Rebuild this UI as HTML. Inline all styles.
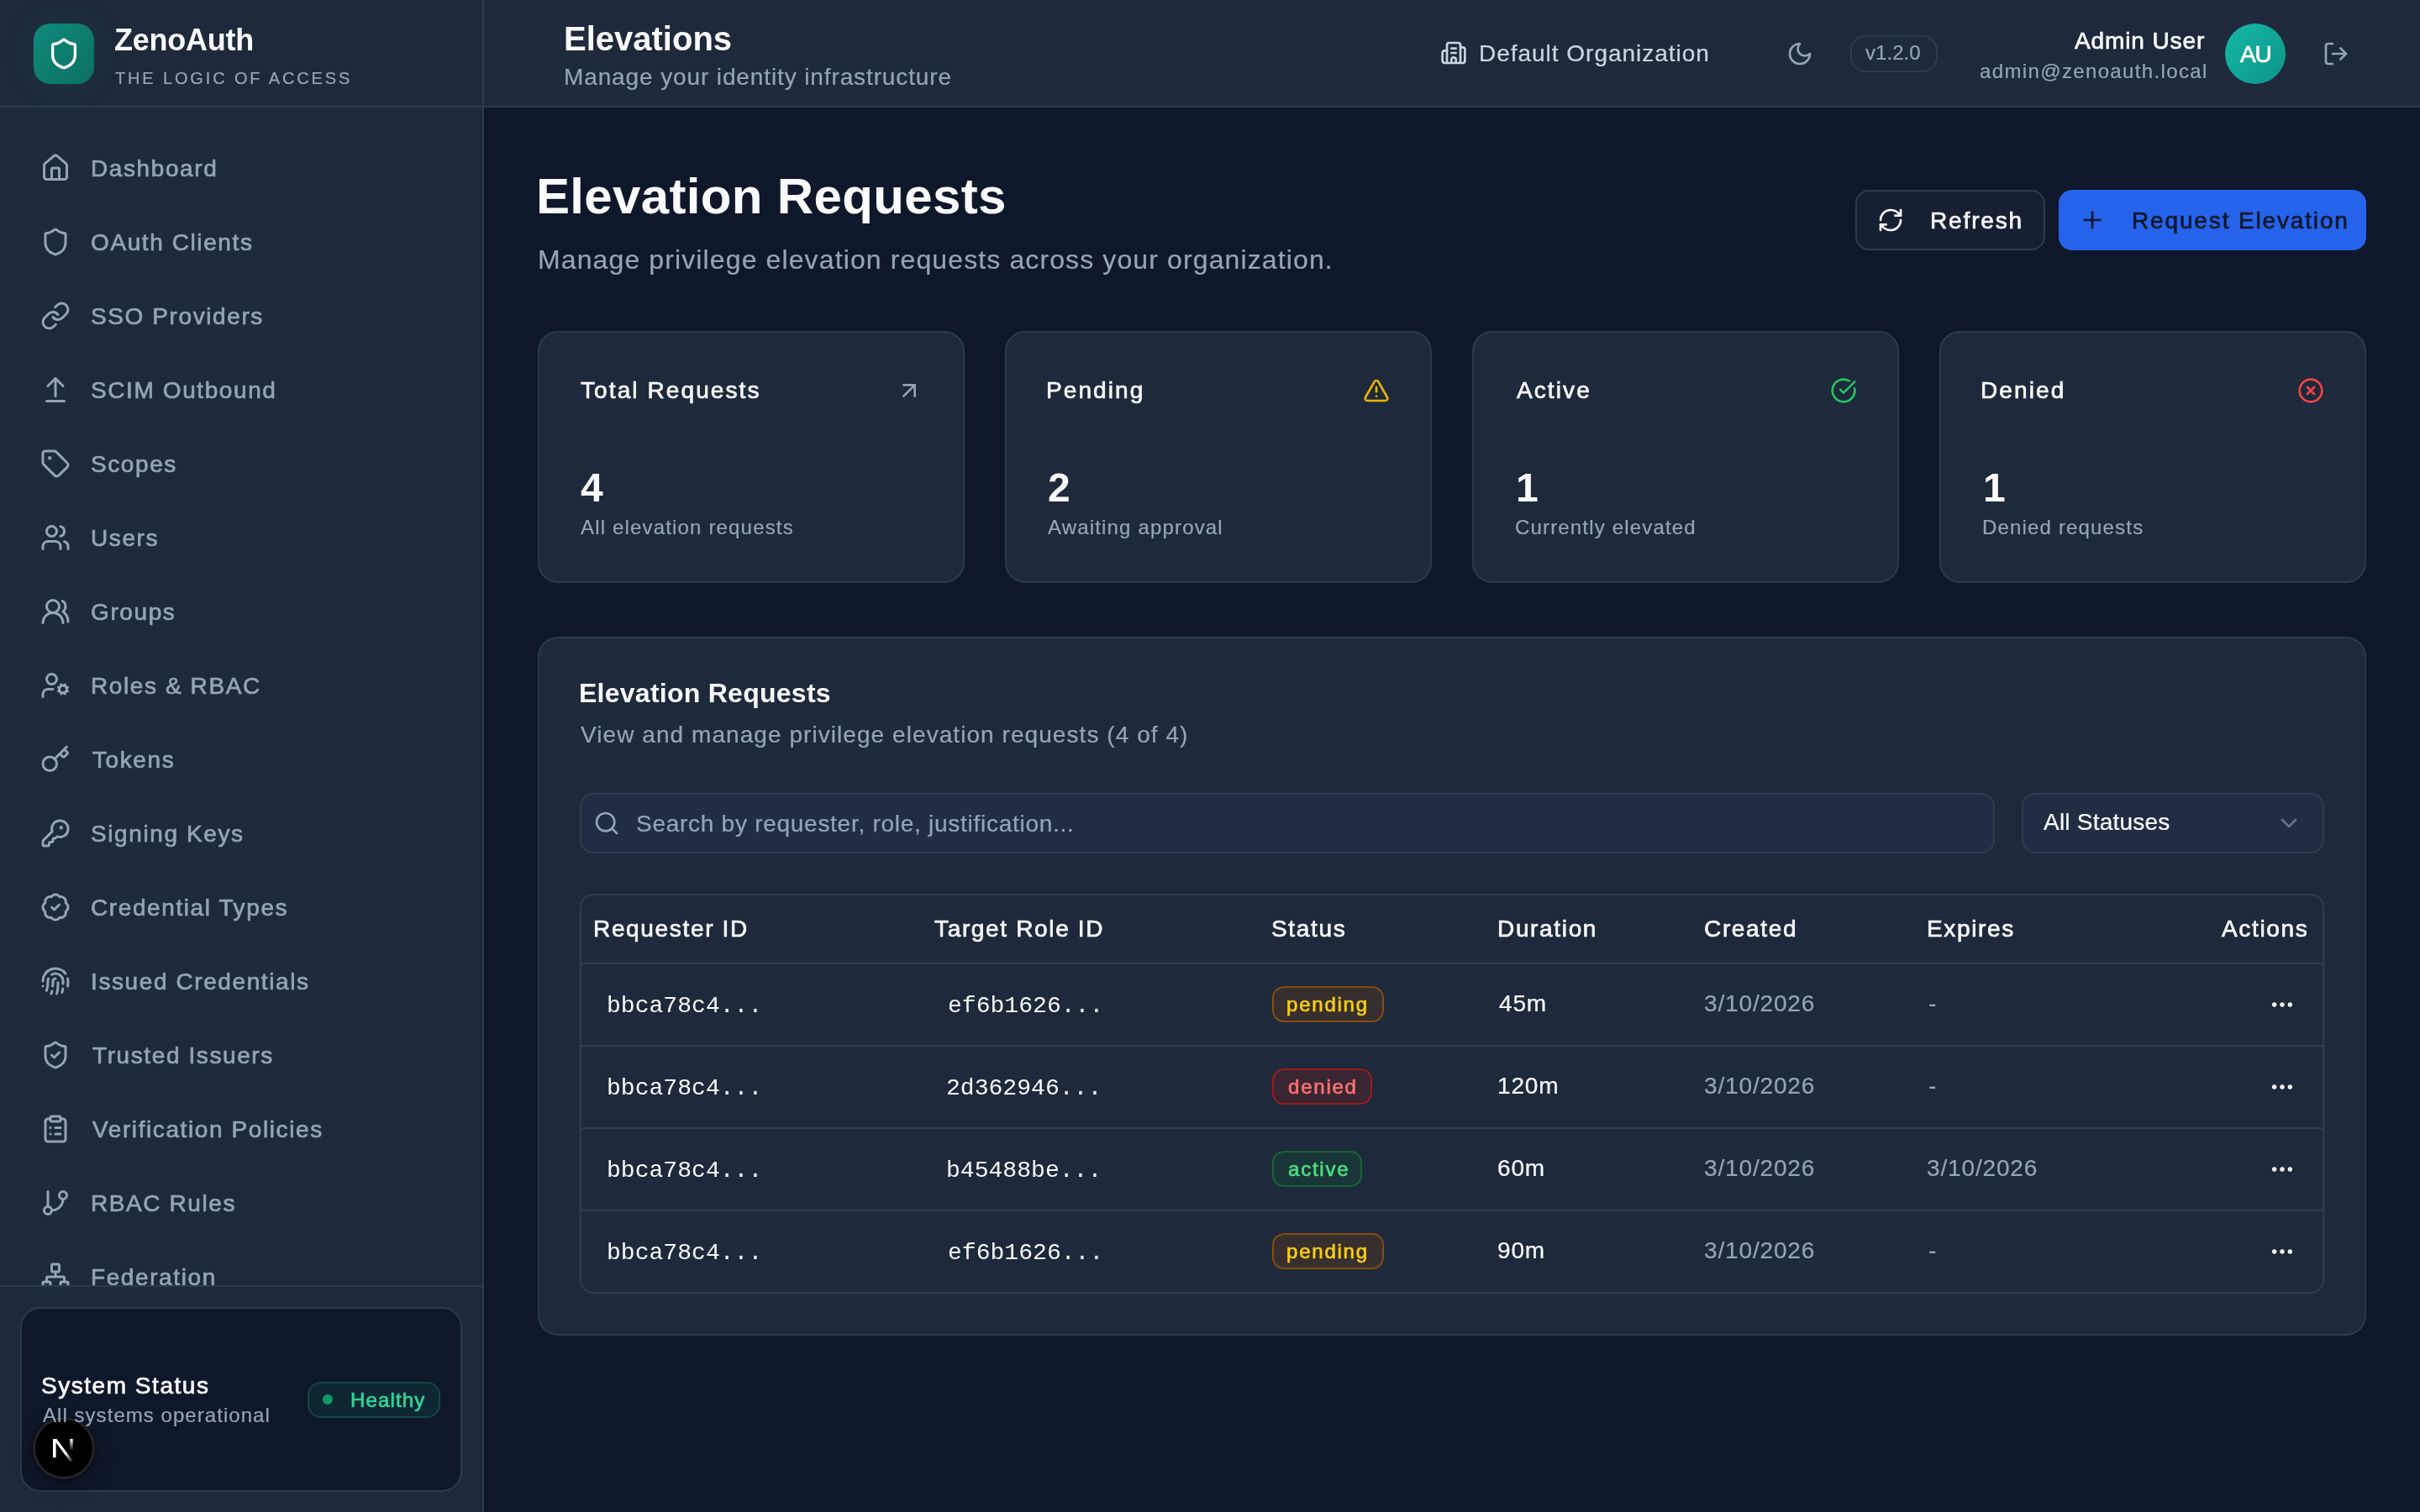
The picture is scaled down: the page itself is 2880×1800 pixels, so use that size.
<!DOCTYPE html>
<html><head><meta charset="utf-8"><title>ZenoAuth - Elevations</title>
<style>
*{box-sizing:border-box;margin:0;padding:0}
html,body{width:1440px;height:900px;overflow:hidden}
@media (min-width:2000px){html{zoom:2}}
body{background:#0f172a;font-family:"Liberation Sans",sans-serif;position:relative}
.bx{position:absolute}
.tx{position:absolute;white-space:nowrap;will-change:transform}
svg.i{position:absolute;fill:none;stroke:currentColor;stroke-width:2;stroke-linecap:round;stroke-linejoin:round}
</style></head>
<body>
<div class="bx" style="left:0px;top:0px;width:288px;height:900px;background:#1e293b;border-right:1px solid #2b3a52"></div>
<div class="bx" style="left:0px;top:63px;width:287px;height:1px;background:#2b3a52"></div>
<div class="bx" style="left:20px;top:14px;width:36px;height:36px;border-radius:10px;background:linear-gradient(135deg,#0f8a7b,#0c6f63);box-shadow:0 0 20px rgba(20,184,166,.10)"></div>
<svg class="i" style="left:28px;top:22px;width:20px;height:20px;color:#ffffff" viewBox="0 0 24 24"><path d="M20 13c0 5-3.5 7.5-7.66 8.95a1 1 0 0 1-.67-.01C7.5 20.5 4 18 4 13V6a1 1 0 0 1 1-1c2 0 4.5-1.2 6.24-2.72a1.17 1.17 0 0 1 1.52 0C14.51 3.81 17 5 19 5a1 1 0 0 1 1 1z"/></svg>
<div class="bx" style="left:0;top:64px;width:287px;height:701px;overflow:hidden"><svg class="i" style="left:24px;top:calc(-64px + 91px);width:18px;height:18px;color:#94a3b8" viewBox="0 0 24 24"><path d="M15 21v-8a1 1 0 0 0-1-1h-4a1 1 0 0 0-1 1v8"/><path d="M3 10a2 2 0 0 1 .709-1.528l7-5.999a2 2 0 0 1 2.582 0l7 5.999A2 2 0 0 1 21 10v9a2 2 0 0 1-2 2H5a2 2 0 0 1-2-2z"/></svg><svg class="i" style="left:24px;top:calc(-64px + 135px);width:18px;height:18px;color:#94a3b8" viewBox="0 0 24 24"><path d="M20 13c0 5-3.5 7.5-7.66 8.95a1 1 0 0 1-.67-.01C7.5 20.5 4 18 4 13V6a1 1 0 0 1 1-1c2 0 4.5-1.2 6.24-2.72a1.17 1.17 0 0 1 1.52 0C14.51 3.81 17 5 19 5a1 1 0 0 1 1 1z"/></svg><svg class="i" style="left:24px;top:calc(-64px + 179px);width:18px;height:18px;color:#94a3b8" viewBox="0 0 24 24"><path d="M10 13a5 5 0 0 0 7.54.54l3-3a5 5 0 0 0-7.07-7.07l-1.72 1.71"/><path d="M14 11a5 5 0 0 0-7.54-.54l-3 3a5 5 0 0 0 7.07 7.07l1.71-1.71"/></svg><svg class="i" style="left:24px;top:calc(-64px + 223px);width:18px;height:18px;color:#94a3b8" viewBox="0 0 24 24"><path d="m18 9-6-6-6 6"/><path d="M12 3v14"/><path d="M5 21h14"/></svg><svg class="i" style="left:24px;top:calc(-64px + 267px);width:18px;height:18px;color:#94a3b8" viewBox="0 0 24 24"><path d="M12.586 2.586A2 2 0 0 0 11.172 2H4a2 2 0 0 0-2 2v7.172a2 2 0 0 0 .586 1.414l8.704 8.704a2.426 2.426 0 0 0 3.42 0l6.58-6.58a2.426 2.426 0 0 0 0-3.42z"/><circle cx="7.5" cy="7.5" r=".5" fill="currentColor"/></svg><svg class="i" style="left:24px;top:calc(-64px + 311px);width:18px;height:18px;color:#94a3b8" viewBox="0 0 24 24"><path d="M16 21v-2a4 4 0 0 0-4-4H6a4 4 0 0 0-4 4v2"/><circle cx="9" cy="7" r="4"/><path d="M22 21v-2a4 4 0 0 0-3-3.87"/><path d="M16 3.13a4 4 0 0 1 0 7.75"/></svg><svg class="i" style="left:24px;top:calc(-64px + 355px);width:18px;height:18px;color:#94a3b8" viewBox="0 0 24 24"><path d="M18 21a8 8 0 0 0-16 0"/><circle cx="10" cy="8" r="5"/><path d="M22 20c0-3.37-2-6.5-4-8a5 5 0 0 0-.45-8.3"/></svg><svg class="i" style="left:24px;top:calc(-64px + 399px);width:18px;height:18px;color:#94a3b8" viewBox="0 0 24 24"><path d="M10 15H6a4 4 0 0 0-4 4v2"/><path d="m14.305 16.53.923-.382"/><path d="m15.228 13.852-.923-.383"/><path d="m16.852 12.228-.383-.923"/><path d="m16.852 17.772-.383.924"/><path d="m19.148 12.228.383-.923"/><path d="m19.53 18.696-.382-.924"/><path d="m20.772 13.852.924-.383"/><path d="m20.772 16.148.924.383"/><circle cx="18" cy="15" r="3"/><circle cx="9" cy="7" r="4"/></svg><svg class="i" style="left:24px;top:calc(-64px + 443px);width:18px;height:18px;color:#94a3b8" viewBox="0 0 24 24"><path d="m15.5 7.5 2.3 2.3a1 1 0 0 0 1.4 0l2.1-2.1a1 1 0 0 0 0-1.4L19 4"/><path d="m21 2-9.6 9.6"/><circle cx="7.5" cy="15.5" r="5.5"/></svg><svg class="i" style="left:24px;top:calc(-64px + 487px);width:18px;height:18px;color:#94a3b8" viewBox="0 0 24 24"><path d="M2.586 17.414A2 2 0 0 0 2 18.828V21a1 1 0 0 0 1 1h3a1 1 0 0 0 1-1v-1a1 1 0 0 1 1-1h1a1 1 0 0 0 1-1v-1a1 1 0 0 1 1-1h.172a2 2 0 0 0 1.414-.586l.814-.814a6.5 6.5 0 1 0-4-4z"/><circle cx="16.5" cy="7.5" r=".5" fill="currentColor"/></svg><svg class="i" style="left:24px;top:calc(-64px + 531px);width:18px;height:18px;color:#94a3b8" viewBox="0 0 24 24"><path d="M3.85 8.62a4 4 0 0 1 4.78-4.77 4 4 0 0 1 6.74 0 4 4 0 0 1 4.78 4.78 4 4 0 0 1 0 6.74 4 4 0 0 1-4.77 4.78 4 4 0 0 1-6.75 0 4 4 0 0 1-4.78-4.77 4 4 0 0 1 0-6.76Z"/><path d="m9 12 2 2 4-4"/></svg><svg class="i" style="left:24px;top:calc(-64px + 575px);width:18px;height:18px;color:#94a3b8" viewBox="0 0 24 24"><path d="M12 10a2 2 0 0 0-2 2c0 1.02-.1 2.51-.26 4"/><path d="M14 13.12c0 2.38 0 6.38-1 8.88"/><path d="M17.29 21.02c.12-.6.43-2.3.5-3.02"/><path d="M2 12a10 10 0 0 1 18-6"/><path d="M2 16h.01"/><path d="M21.8 16c.2-2 .131-5.354 0-6"/><path d="M5 19.5C5.5 18 6 15 6 12a6 6 0 0 1 .34-2"/><path d="M8.65 22c.21-.66.45-1.32.57-2"/><path d="M9 6.8a6 6 0 0 1 9 5.2v2"/></svg><svg class="i" style="left:24px;top:calc(-64px + 619px);width:18px;height:18px;color:#94a3b8" viewBox="0 0 24 24"><path d="M20 13c0 5-3.5 7.5-7.66 8.95a1 1 0 0 1-.67-.01C7.5 20.5 4 18 4 13V6a1 1 0 0 1 1-1c2 0 4.5-1.2 6.24-2.72a1.17 1.17 0 0 1 1.52 0C14.51 3.81 17 5 19 5a1 1 0 0 1 1 1z"/><path d="m9 12 2 2 4-4"/></svg><svg class="i" style="left:24px;top:calc(-64px + 663px);width:18px;height:18px;color:#94a3b8" viewBox="0 0 24 24"><rect width="8" height="4" x="8" y="2" rx="1" ry="1"/><path d="M16 4h2a2 2 0 0 1 2 2v14a2 2 0 0 1-2 2H6a2 2 0 0 1-2-2V6a2 2 0 0 1 2-2h2"/><path d="M12 11h4"/><path d="M12 16h4"/><path d="M8 11h.01"/><path d="M8 16h.01"/></svg><svg class="i" style="left:24px;top:calc(-64px + 707px);width:18px;height:18px;color:#94a3b8" viewBox="0 0 24 24"><line x1="6" x2="6" y1="3" y2="15"/><circle cx="18" cy="6" r="3"/><circle cx="6" cy="18" r="3"/><path d="M18 9a9 9 0 0 1-9 9"/></svg><svg class="i" style="left:24px;top:calc(-64px + 751px);width:18px;height:18px;color:#94a3b8" viewBox="0 0 24 24"><rect x="16" y="16" width="6" height="6" rx="1"/><rect x="2" y="16" width="6" height="6" rx="1"/><rect x="9" y="2" width="6" height="6" rx="1"/><path d="M5 16v-3a1 1 0 0 1 1-1h12a1 1 0 0 1 1 1v3"/><path d="M12 12V8"/></svg><div id="nav0" class="tx" style="left:54.00px;top:calc(-64px + 93.25px);font-size:14px;line-height:14px;font-weight:normal;color:#94a3b8;letter-spacing:0.798px;font-family:'Liberation Sans',sans-serif;-webkit-text-stroke:0.35px currentColor;">Dashboard</div><div id="nav1" class="tx" style="left:54.00px;top:calc(-64px + 137.25px);font-size:14px;line-height:14px;font-weight:normal;color:#94a3b8;letter-spacing:0.798px;font-family:'Liberation Sans',sans-serif;-webkit-text-stroke:0.35px currentColor;">OAuth Clients</div><div id="nav2" class="tx" style="left:54.00px;top:calc(-64px + 181.25px);font-size:14px;line-height:14px;font-weight:normal;color:#94a3b8;letter-spacing:0.798px;font-family:'Liberation Sans',sans-serif;-webkit-text-stroke:0.35px currentColor;">SSO Providers</div><div id="nav3" class="tx" style="left:54.00px;top:calc(-64px + 225.25px);font-size:14px;line-height:14px;font-weight:normal;color:#94a3b8;letter-spacing:0.798px;font-family:'Liberation Sans',sans-serif;-webkit-text-stroke:0.35px currentColor;">SCIM Outbound</div><div id="nav4" class="tx" style="left:54.00px;top:calc(-64px + 269.25px);font-size:14px;line-height:14px;font-weight:normal;color:#94a3b8;letter-spacing:0.798px;font-family:'Liberation Sans',sans-serif;-webkit-text-stroke:0.35px currentColor;">Scopes</div><div id="nav5" class="tx" style="left:54.00px;top:calc(-64px + 313.25px);font-size:14px;line-height:14px;font-weight:normal;color:#94a3b8;letter-spacing:0.798px;font-family:'Liberation Sans',sans-serif;-webkit-text-stroke:0.35px currentColor;">Users</div><div id="nav6" class="tx" style="left:54.00px;top:calc(-64px + 357.25px);font-size:14px;line-height:14px;font-weight:normal;color:#94a3b8;letter-spacing:0.798px;font-family:'Liberation Sans',sans-serif;-webkit-text-stroke:0.35px currentColor;">Groups</div><div id="nav7" class="tx" style="left:54.00px;top:calc(-64px + 401.25px);font-size:14px;line-height:14px;font-weight:normal;color:#94a3b8;letter-spacing:0.798px;font-family:'Liberation Sans',sans-serif;-webkit-text-stroke:0.35px currentColor;">Roles &amp; RBAC</div><div id="nav8" class="tx" style="left:55.00px;top:calc(-64px + 445.25px);font-size:14px;line-height:14px;font-weight:normal;color:#94a3b8;letter-spacing:0.798px;font-family:'Liberation Sans',sans-serif;-webkit-text-stroke:0.35px currentColor;">Tokens</div><div id="nav9" class="tx" style="left:54.00px;top:calc(-64px + 489.25px);font-size:14px;line-height:14px;font-weight:normal;color:#94a3b8;letter-spacing:0.798px;font-family:'Liberation Sans',sans-serif;-webkit-text-stroke:0.35px currentColor;">Signing Keys</div><div id="nav10" class="tx" style="left:54.00px;top:calc(-64px + 533.25px);font-size:14px;line-height:14px;font-weight:normal;color:#94a3b8;letter-spacing:0.798px;font-family:'Liberation Sans',sans-serif;-webkit-text-stroke:0.35px currentColor;">Credential Types</div><div id="nav11" class="tx" style="left:54.00px;top:calc(-64px + 577.25px);font-size:14px;line-height:14px;font-weight:normal;color:#94a3b8;letter-spacing:0.798px;font-family:'Liberation Sans',sans-serif;-webkit-text-stroke:0.35px currentColor;">Issued Credentials</div><div id="nav12" class="tx" style="left:55.00px;top:calc(-64px + 621.25px);font-size:14px;line-height:14px;font-weight:normal;color:#94a3b8;letter-spacing:0.798px;font-family:'Liberation Sans',sans-serif;-webkit-text-stroke:0.35px currentColor;">Trusted Issuers</div><div id="nav13" class="tx" style="left:55.00px;top:calc(-64px + 665.25px);font-size:14px;line-height:14px;font-weight:normal;color:#94a3b8;letter-spacing:0.798px;font-family:'Liberation Sans',sans-serif;-webkit-text-stroke:0.35px currentColor;">Verification Policies</div><div id="nav14" class="tx" style="left:54.00px;top:calc(-64px + 709.25px);font-size:14px;line-height:14px;font-weight:normal;color:#94a3b8;letter-spacing:0.798px;font-family:'Liberation Sans',sans-serif;-webkit-text-stroke:0.35px currentColor;">RBAC Rules</div><div id="nav15" class="tx" style="left:54.00px;top:calc(-64px + 753.25px);font-size:14px;line-height:14px;font-weight:normal;color:#94a3b8;letter-spacing:0.798px;font-family:'Liberation Sans',sans-serif;-webkit-text-stroke:0.35px currentColor;">Federation</div></div>
<div class="bx" style="left:0px;top:765px;width:287px;height:1px;background:#2b3a52"></div>
<div class="bx" style="left:12px;top:778px;width:263px;height:110px;border-radius:12px;background:#0f172a;border:1px solid #2b3a52"></div>
<div class="bx" style="left:183.2px;top:822.4px;width:79px;height:21.5px;border-radius:8px;border:1px solid rgba(16,185,129,.24);background:rgba(16,185,129,.1)"></div>
<div class="bx" style="left:191.8px;top:830px;width:6px;height:6px;border-radius:3px;background:#0f9a6d"></div>
<div class="bx" style="left:288px;top:0px;width:1152px;height:64px;background:#1e293b;border-bottom:1px solid #2b3a52"></div>
<svg class="i" style="left:857px;top:23.6px;width:16px;height:16px;color:#cbd5e1" viewBox="0 0 24 24"><path d="M10 12h4"/><path d="M10 8h4"/><path d="M14 21v-3a2 2 0 0 0-4 0v3"/><path d="M6 10H4a2 2 0 0 0-2 2v7a2 2 0 0 0 2 2h16a2 2 0 0 0 2-2V9a2 2 0 0 0-2-2h-2"/><path d="M6 21V5a2 2 0 0 1 2-2h8a2 2 0 0 1 2 2v16"/></svg>
<svg class="i" style="left:1063px;top:24px;width:16px;height:16px;color:#94a3b8" viewBox="0 0 24 24"><path d="M12 3a6 6 0 0 0 9 9 9 9 0 1 1-9-9Z"/></svg>
<div class="bx" style="left:1101px;top:21px;width:52px;height:22px;border:1px solid #2b3a55;border-radius:9px"></div>
<div class="bx" style="left:1324px;top:14px;width:36px;height:36px;border-radius:18px;background:linear-gradient(135deg,#14b8a6,#0d9488)"></div>
<svg class="i" style="left:1382px;top:24px;width:16px;height:16px;color:#94a3b8" viewBox="0 0 24 24"><path d="M9 21H5a2 2 0 0 1-2-2V5a2 2 0 0 1 2-2h4"/><path d="m16 17 5-5-5-5"/><path d="M21 12H9"/></svg>
<div class="bx" style="left:1104px;top:113px;width:113px;height:36px;border:1px solid #2e3b52;border-radius:8px;background:#172033"></div>
<svg class="i" style="left:1117px;top:123px;width:16px;height:16px;color:#f8fafc" viewBox="0 0 24 24"><path d="M3 12a9 9 0 0 1 9-9 9.75 9.75 0 0 1 6.74 2.74L21 8"/><path d="M21 3v5h-5"/><path d="M21 12a9 9 0 0 1-9 9 9.75 9.75 0 0 1-6.74-2.74L3 16"/><path d="M8 16H3v5"/></svg>
<div class="bx" style="left:1225px;top:113px;width:183px;height:36px;border-radius:8px;background:#2563eb"></div>
<svg class="i" style="left:1237.1px;top:123px;width:16px;height:16px;color:#0f172a" viewBox="0 0 24 24"><path d="M5 12h14"/><path d="M12 5v14"/></svg>
<div class="bx" style="left:320px;top:197px;width:254px;height:150px;border-radius:12px;background:#1e293b;border:1px solid #2b3a52"></div>
<svg class="i" style="left:532.8px;top:224.4px;width:16px;height:16px;color:#94a3b8" viewBox="0 0 24 24"><path d="M7 7h10v10"/><path d="M7 17 17 7"/></svg>
<div class="bx" style="left:598px;top:197px;width:254px;height:150px;border-radius:12px;background:#1e293b;border:1px solid #2b3a52"></div>
<svg class="i" style="left:810.8px;top:224.4px;width:16px;height:16px;color:#eab308" viewBox="0 0 24 24"><path d="m21.73 18-8-14a2 2 0 0 0-3.48 0l-8 14A2 2 0 0 0 4 21h16a2 2 0 0 0 1.73-3"/><path d="M12 9v4"/><path d="M12 17h.01"/></svg>
<div class="bx" style="left:876px;top:197px;width:254px;height:150px;border-radius:12px;background:#1e293b;border:1px solid #2b3a52"></div>
<svg class="i" style="left:1088.8px;top:224.4px;width:16px;height:16px;color:#22c55e" viewBox="0 0 24 24"><path d="M21.801 10A10 10 0 1 1 17 3.335"/><path d="m9 11 3 3L22 4"/></svg>
<div class="bx" style="left:1154px;top:197px;width:254px;height:150px;border-radius:12px;background:#1e293b;border:1px solid #2b3a52"></div>
<svg class="i" style="left:1366.8px;top:224.4px;width:16px;height:16px;color:#ef4444" viewBox="0 0 24 24"><circle cx="12" cy="12" r="10"/><path d="m15 9-6 6"/><path d="m9 9 6 6"/></svg>
<div class="bx" style="left:320px;top:379px;width:1088px;height:416px;border-radius:12px;background:#1e293b;border:1px solid #2b3a52"></div>
<div class="bx" style="left:345px;top:472px;width:842px;height:36px;border:1px solid #2e3c55;border-radius:8px;background:#222d43"></div>
<svg class="i" style="left:353px;top:481.8px;width:16px;height:16px;color:#94a3b8" viewBox="0 0 24 24"><circle cx="11" cy="11" r="8"/><path d="m21 21-4.3-4.3"/></svg>
<div class="bx" style="left:1203px;top:472px;width:180px;height:36px;border:1px solid #2e3c55;border-radius:8px;background:#222d43"></div>
<svg class="i" style="left:1354px;top:481.8px;width:16px;height:16px;color:#64748b" viewBox="0 0 24 24"><path d="m6 9 6 6 6-6"/></svg>
<div class="bx" style="left:345px;top:532px;width:1038px;height:238px;border:1px solid #2e3c55;border-radius:8px"></div>
<div class="bx" style="left:346px;top:573px;width:1036px;height:1px;background:#2e3c55"></div>
<div class="bx" style="left:346px;top:622px;width:1036px;height:1px;background:#2e3c55"></div>
<div class="bx" style="left:346px;top:671px;width:1036px;height:1px;background:#2e3c55"></div>
<div class="bx" style="left:346px;top:720px;width:1036px;height:1px;background:#2e3c55"></div>
<div class="bx" style="left:757px;top:587px;width:66.6px;height:21.6px;border-radius:7px;border:1px solid #854d0e;background:rgba(113,63,18,.3)"></div>
<svg class="i" style="left:1350px;top:590px;width:16px;height:16px;color:#f8fafc" viewBox="0 0 24 24"><circle cx="12" cy="12" r="1"/><circle cx="19" cy="12" r="1"/><circle cx="5" cy="12" r="1"/></svg>
<div class="bx" style="left:757px;top:636px;width:59.6px;height:21.6px;border-radius:7px;border:1px solid #991b1b;background:rgba(127,29,29,.3)"></div>
<svg class="i" style="left:1350px;top:639px;width:16px;height:16px;color:#f8fafc" viewBox="0 0 24 24"><circle cx="12" cy="12" r="1"/><circle cx="19" cy="12" r="1"/><circle cx="5" cy="12" r="1"/></svg>
<div class="bx" style="left:757px;top:685px;width:53.5px;height:21.6px;border-radius:7px;border:1px solid #166534;background:rgba(20,83,45,.3)"></div>
<svg class="i" style="left:1350px;top:688px;width:16px;height:16px;color:#f8fafc" viewBox="0 0 24 24"><circle cx="12" cy="12" r="1"/><circle cx="19" cy="12" r="1"/><circle cx="5" cy="12" r="1"/></svg>
<div class="bx" style="left:757px;top:734px;width:66.6px;height:21.6px;border-radius:7px;border:1px solid #854d0e;background:rgba(113,63,18,.3)"></div>
<svg class="i" style="left:1350px;top:737px;width:16px;height:16px;color:#f8fafc" viewBox="0 0 24 24"><circle cx="12" cy="12" r="1"/><circle cx="19" cy="12" r="1"/><circle cx="5" cy="12" r="1"/></svg>
<div class="bx" style="left:19.4px;top:843.3px;width:37.3px;height:37.3px;border-radius:50%;background:#000;border:1.6px solid #242424;box-shadow:0 0 0 1px rgba(0,0,0,.25),0 4px 12px rgba(0,0,0,.3)"></div>
<svg style="position:absolute;left:31.6px;top:856.6px;width:12.6px;height:13.6px" viewBox="0 0 12.6 13.6"><defs><linearGradient id="ng" x1="0" y1="0" x2="0" y2="1"><stop offset="0" stop-color="#fff"/><stop offset="1" stop-color="#fff" stop-opacity="0"/></linearGradient><linearGradient id="ng2" x1="0" y1="0" x2="1" y2="1"><stop offset=".6" stop-color="#fff"/><stop offset="1" stop-color="#fff" stop-opacity="0"/></linearGradient></defs><rect x="0" y="0" width="1.8" height="11.1" fill="#fff"/><path d="M0.2 0 H2.2 L12.3 13.6 H10.3 Z" fill="url(#ng2)"/><rect x="10.1" y="0" width="1.8" height="7" fill="url(#ng)"/></svg>
<div id="brand" class="tx" style="left:68.10px;top:14.76px;font-size:18px;line-height:18px;font-weight:bold;color:#f8fafc;letter-spacing:-0.129px;font-family:'Liberation Sans',sans-serif;">ZenoAuth</div>
<div id="tag" class="tx" style="left:68.40px;top:41.44px;font-size:10px;line-height:10px;font-weight:normal;color:#94a3b8;letter-spacing:1.428px;font-family:'Liberation Sans',sans-serif;-webkit-text-stroke:0.12px currentColor;">THE LOGIC OF ACCESS</div>
<div id="sys" class="tx" style="left:24.60px;top:818.15px;font-size:14px;line-height:14px;font-weight:normal;color:#f8fafc;letter-spacing:0.767px;font-family:'Liberation Sans',sans-serif;-webkit-text-stroke:0.35px currentColor;">System Status</div>
<div id="allsys" class="tx" style="left:25.50px;top:836.64px;font-size:12px;line-height:12px;font-weight:normal;color:#94a3b8;letter-spacing:0.523px;font-family:'Liberation Sans',sans-serif;-webkit-text-stroke:0.12px currentColor;">All systems operational</div>
<div id="healthy" class="tx" style="left:208.40px;top:827.44px;font-size:12px;line-height:12px;font-weight:normal;color:#34d399;letter-spacing:0.567px;font-family:'Liberation Sans',sans-serif;-webkit-text-stroke:0.35px currentColor;">Healthy</div>
<div id="hdT" class="tx" style="left:335.50px;top:12.97px;font-size:20px;line-height:20px;font-weight:bold;color:#f8fafc;letter-spacing:0.000px;font-family:'Liberation Sans',sans-serif;">Elevations</div>
<div id="hdS" class="tx" style="left:335.50px;top:39.05px;font-size:14px;line-height:14px;font-weight:normal;color:#94a3b8;letter-spacing:0.441px;font-family:'Liberation Sans',sans-serif;-webkit-text-stroke:0.12px currentColor;">Manage your identity infrastructure</div>
<div id="org" class="tx" style="left:880.10px;top:25.15px;font-size:14px;line-height:14px;font-weight:normal;color:#cbd5e1;letter-spacing:0.489px;font-family:'Liberation Sans',sans-serif;-webkit-text-stroke:0.12px currentColor;">Default Organization</div>
<div id="ver" class="tx" style="left:1109.80px;top:25.74px;font-size:12px;line-height:12px;font-weight:normal;color:#94a3b8;letter-spacing:0.020px;font-family:'Liberation Sans',sans-serif;-webkit-text-stroke:0.12px currentColor;">v1.2.0</div>
<div id="user" class="tx" style="left:1234.30px;top:17.45px;font-size:14px;line-height:14px;font-weight:normal;color:#f8fafc;letter-spacing:0.444px;font-family:'Liberation Sans',sans-serif;-webkit-text-stroke:0.35px currentColor;">Admin User</div>
<div id="email" class="tx" style="left:1177.80px;top:36.44px;font-size:12px;line-height:12px;font-weight:normal;color:#94a3b8;letter-spacing:0.679px;font-family:'Liberation Sans',sans-serif;-webkit-text-stroke:0.12px currentColor;">admin@zenoauth.local</div>
<div id="au" class="tx" style="left:1333.10px;top:25.35px;font-size:14px;line-height:14px;font-weight:normal;color:#ffffff;letter-spacing:-0.600px;font-family:'Liberation Sans',sans-serif;-webkit-text-stroke:0.35px currentColor;">AU</div>
<div id="h1" class="tx" style="left:319.10px;top:101.91px;font-size:30px;line-height:30px;font-weight:bold;color:#f8fafc;letter-spacing:0.171px;font-family:'Liberation Sans',sans-serif;">Elevation Requests</div>
<div id="sub" class="tx" style="left:320.10px;top:146.66px;font-size:16px;line-height:16px;font-weight:normal;color:#94a3b8;letter-spacing:0.558px;font-family:'Liberation Sans',sans-serif;-webkit-text-stroke:0.12px currentColor;">Manage privilege elevation requests across your organization.</div>
<div id="btnR" class="tx" style="left:1148.40px;top:124.35px;font-size:14px;line-height:14px;font-weight:normal;color:#f8fafc;letter-spacing:0.927px;font-family:'Liberation Sans',sans-serif;-webkit-text-stroke:0.35px currentColor;">Refresh</div>
<div id="btnQ" class="tx" style="left:1268.30px;top:124.35px;font-size:14px;line-height:14px;font-weight:normal;color:#0f172a;letter-spacing:0.927px;font-family:'Liberation Sans',sans-serif;-webkit-text-stroke:0.35px currentColor;">Request Elevation</div>
<div id="stT0" class="tx" style="left:345.30px;top:225.25px;font-size:14px;line-height:14px;font-weight:normal;color:#f8fafc;letter-spacing:1.049px;font-family:'Liberation Sans',sans-serif;-webkit-text-stroke:0.35px currentColor;">Total Requests</div>
<div id="stN0" class="tx" style="left:345.30px;top:278.68px;font-size:24px;line-height:24px;font-weight:bold;color:#f8fafc;letter-spacing:0.000px;font-family:'Liberation Sans',sans-serif;">4</div>
<div id="stD0" class="tx" style="left:345.30px;top:308.24px;font-size:12px;line-height:12px;font-weight:normal;color:#94a3b8;letter-spacing:0.584px;font-family:'Liberation Sans',sans-serif;-webkit-text-stroke:0.12px currentColor;">All elevation requests</div>
<div id="stT1" class="tx" style="left:622.30px;top:225.25px;font-size:14px;line-height:14px;font-weight:normal;color:#f8fafc;letter-spacing:1.049px;font-family:'Liberation Sans',sans-serif;-webkit-text-stroke:0.35px currentColor;">Pending</div>
<div id="stN1" class="tx" style="left:623.30px;top:278.68px;font-size:24px;line-height:24px;font-weight:bold;color:#f8fafc;letter-spacing:0.000px;font-family:'Liberation Sans',sans-serif;">2</div>
<div id="stD1" class="tx" style="left:623.30px;top:308.24px;font-size:12px;line-height:12px;font-weight:normal;color:#94a3b8;letter-spacing:0.584px;font-family:'Liberation Sans',sans-serif;-webkit-text-stroke:0.12px currentColor;">Awaiting approval</div>
<div id="stT2" class="tx" style="left:902.30px;top:225.25px;font-size:14px;line-height:14px;font-weight:normal;color:#f8fafc;letter-spacing:1.049px;font-family:'Liberation Sans',sans-serif;-webkit-text-stroke:0.35px currentColor;">Active</div>
<div id="stN2" class="tx" style="left:901.80px;top:278.68px;font-size:24px;line-height:24px;font-weight:bold;color:#f8fafc;letter-spacing:0.000px;font-family:'Liberation Sans',sans-serif;">1</div>
<div id="stD2" class="tx" style="left:901.30px;top:308.24px;font-size:12px;line-height:12px;font-weight:normal;color:#94a3b8;letter-spacing:0.584px;font-family:'Liberation Sans',sans-serif;-webkit-text-stroke:0.12px currentColor;">Currently elevated</div>
<div id="stT3" class="tx" style="left:1178.30px;top:225.25px;font-size:14px;line-height:14px;font-weight:normal;color:#f8fafc;letter-spacing:1.049px;font-family:'Liberation Sans',sans-serif;-webkit-text-stroke:0.35px currentColor;">Denied</div>
<div id="stN3" class="tx" style="left:1179.80px;top:278.68px;font-size:24px;line-height:24px;font-weight:bold;color:#f8fafc;letter-spacing:0.000px;font-family:'Liberation Sans',sans-serif;">1</div>
<div id="stD3" class="tx" style="left:1179.30px;top:308.24px;font-size:12px;line-height:12px;font-weight:normal;color:#94a3b8;letter-spacing:0.584px;font-family:'Liberation Sans',sans-serif;-webkit-text-stroke:0.12px currentColor;">Denied requests</div>
<div id="cT" class="tx" style="left:344.30px;top:404.66px;font-size:16px;line-height:16px;font-weight:bold;color:#f8fafc;letter-spacing:0.129px;font-family:'Liberation Sans',sans-serif;">Elevation Requests</div>
<div id="cD" class="tx" style="left:345.30px;top:430.35px;font-size:14px;line-height:14px;font-weight:normal;color:#94a3b8;letter-spacing:0.531px;font-family:'Liberation Sans',sans-serif;-webkit-text-stroke:0.12px currentColor;">View and manage privilege elevation requests (4 of 4)</div>
<div id="ph" class="tx" style="left:378.40px;top:483.65px;font-size:14px;line-height:14px;font-weight:normal;color:#94a3b8;letter-spacing:0.364px;font-family:'Liberation Sans',sans-serif;-webkit-text-stroke:0.12px currentColor;">Search by requester, role, justification...</div>
<div id="sel" class="tx" style="left:1215.80px;top:482.65px;font-size:14px;line-height:14px;font-weight:normal;color:#f8fafc;letter-spacing:0.109px;font-family:'Liberation Sans',sans-serif;-webkit-text-stroke:0.12px currentColor;">All Statuses</div>
<div id="th0" class="tx" style="left:352.90px;top:545.85px;font-size:14px;line-height:14px;font-weight:normal;color:#f8fafc;letter-spacing:0.829px;font-family:'Liberation Sans',sans-serif;-webkit-text-stroke:0.35px currentColor;">Requester ID</div>
<div id="th1" class="tx" style="left:556.10px;top:545.85px;font-size:14px;line-height:14px;font-weight:normal;color:#f8fafc;letter-spacing:0.829px;font-family:'Liberation Sans',sans-serif;-webkit-text-stroke:0.35px currentColor;">Target Role ID</div>
<div id="th2" class="tx" style="left:756.50px;top:545.85px;font-size:14px;line-height:14px;font-weight:normal;color:#f8fafc;letter-spacing:0.829px;font-family:'Liberation Sans',sans-serif;-webkit-text-stroke:0.35px currentColor;">Status</div>
<div id="th3" class="tx" style="left:891.20px;top:545.85px;font-size:14px;line-height:14px;font-weight:normal;color:#f8fafc;letter-spacing:0.829px;font-family:'Liberation Sans',sans-serif;-webkit-text-stroke:0.35px currentColor;">Duration</div>
<div id="th4" class="tx" style="left:1014.00px;top:545.85px;font-size:14px;line-height:14px;font-weight:normal;color:#f8fafc;letter-spacing:0.829px;font-family:'Liberation Sans',sans-serif;-webkit-text-stroke:0.35px currentColor;">Created</div>
<div id="th5" class="tx" style="left:1146.70px;top:545.85px;font-size:14px;line-height:14px;font-weight:normal;color:#f8fafc;letter-spacing:0.829px;font-family:'Liberation Sans',sans-serif;-webkit-text-stroke:0.35px currentColor;">Expires</div>
<div id="th6" class="tx" style="left:1322.00px;top:545.85px;font-size:14px;line-height:14px;font-weight:normal;color:#f8fafc;letter-spacing:0.829px;font-family:'Liberation Sans',sans-serif;-webkit-text-stroke:0.35px currentColor;">Actions</div>
<div id="m1_0" class="tx" style="left:361.20px;top:591.77px;font-size:14px;line-height:14px;font-weight:normal;color:#f8fafc;letter-spacing:0.020px;font-family:'Liberation Mono',monospace;">bbca78c4...</div>
<div id="m2_0" class="tx" style="left:564.10px;top:591.77px;font-size:14px;line-height:14px;font-weight:normal;color:#f8fafc;letter-spacing:0.020px;font-family:'Liberation Mono',monospace;">ef6b1626...</div>
<div id="bd_0" class="tx" style="left:765.60px;top:591.84px;font-size:12px;line-height:12px;font-weight:normal;color:#facc15;letter-spacing:0.889px;font-family:'Liberation Sans',sans-serif;-webkit-text-stroke:0.35px currentColor;">pending</div>
<div id="du_0" class="tx" style="left:892.20px;top:590.65px;font-size:14px;line-height:14px;font-weight:normal;color:#f8fafc;letter-spacing:0.417px;font-family:'Liberation Sans',sans-serif;-webkit-text-stroke:0.12px currentColor;">45m</div>
<div id="cr_0" class="tx" style="left:1014.00px;top:590.65px;font-size:14px;line-height:14px;font-weight:normal;color:#94a3b8;letter-spacing:0.425px;font-family:'Liberation Sans',sans-serif;-webkit-text-stroke:0.12px currentColor;">3/10/2026</div>
<div id="ex_0" class="tx" style="left:1147.40px;top:590.65px;font-size:14px;line-height:14px;font-weight:normal;color:#94a3b8;letter-spacing:0.425px;font-family:'Liberation Sans',sans-serif;-webkit-text-stroke:0.12px currentColor;">-</div>
<div id="m1_1" class="tx" style="left:361.20px;top:640.77px;font-size:14px;line-height:14px;font-weight:normal;color:#f8fafc;letter-spacing:0.020px;font-family:'Liberation Mono',monospace;">bbca78c4...</div>
<div id="m2_1" class="tx" style="left:563.10px;top:640.77px;font-size:14px;line-height:14px;font-weight:normal;color:#f8fafc;letter-spacing:0.020px;font-family:'Liberation Mono',monospace;">2d362946...</div>
<div id="bd_1" class="tx" style="left:766.60px;top:640.84px;font-size:12px;line-height:12px;font-weight:normal;color:#f87171;letter-spacing:0.889px;font-family:'Liberation Sans',sans-serif;-webkit-text-stroke:0.35px currentColor;">denied</div>
<div id="du_1" class="tx" style="left:891.20px;top:639.65px;font-size:14px;line-height:14px;font-weight:normal;color:#f8fafc;letter-spacing:0.417px;font-family:'Liberation Sans',sans-serif;-webkit-text-stroke:0.12px currentColor;">120m</div>
<div id="cr_1" class="tx" style="left:1014.00px;top:639.65px;font-size:14px;line-height:14px;font-weight:normal;color:#94a3b8;letter-spacing:0.425px;font-family:'Liberation Sans',sans-serif;-webkit-text-stroke:0.12px currentColor;">3/10/2026</div>
<div id="ex_1" class="tx" style="left:1147.40px;top:639.65px;font-size:14px;line-height:14px;font-weight:normal;color:#94a3b8;letter-spacing:0.425px;font-family:'Liberation Sans',sans-serif;-webkit-text-stroke:0.12px currentColor;">-</div>
<div id="m1_2" class="tx" style="left:361.20px;top:689.77px;font-size:14px;line-height:14px;font-weight:normal;color:#f8fafc;letter-spacing:0.020px;font-family:'Liberation Mono',monospace;">bbca78c4...</div>
<div id="m2_2" class="tx" style="left:563.10px;top:689.77px;font-size:14px;line-height:14px;font-weight:normal;color:#f8fafc;letter-spacing:0.020px;font-family:'Liberation Mono',monospace;">b45488be...</div>
<div id="bd_2" class="tx" style="left:766.60px;top:689.84px;font-size:12px;line-height:12px;font-weight:normal;color:#4ade80;letter-spacing:0.889px;font-family:'Liberation Sans',sans-serif;-webkit-text-stroke:0.35px currentColor;">active</div>
<div id="du_2" class="tx" style="left:891.20px;top:688.65px;font-size:14px;line-height:14px;font-weight:normal;color:#f8fafc;letter-spacing:0.417px;font-family:'Liberation Sans',sans-serif;-webkit-text-stroke:0.12px currentColor;">60m</div>
<div id="cr_2" class="tx" style="left:1014.00px;top:688.65px;font-size:14px;line-height:14px;font-weight:normal;color:#94a3b8;letter-spacing:0.425px;font-family:'Liberation Sans',sans-serif;-webkit-text-stroke:0.12px currentColor;">3/10/2026</div>
<div id="ex_2" class="tx" style="left:1146.70px;top:688.65px;font-size:14px;line-height:14px;font-weight:normal;color:#94a3b8;letter-spacing:0.425px;font-family:'Liberation Sans',sans-serif;-webkit-text-stroke:0.12px currentColor;">3/10/2026</div>
<div id="m1_3" class="tx" style="left:361.20px;top:738.77px;font-size:14px;line-height:14px;font-weight:normal;color:#f8fafc;letter-spacing:0.020px;font-family:'Liberation Mono',monospace;">bbca78c4...</div>
<div id="m2_3" class="tx" style="left:564.10px;top:738.77px;font-size:14px;line-height:14px;font-weight:normal;color:#f8fafc;letter-spacing:0.020px;font-family:'Liberation Mono',monospace;">ef6b1626...</div>
<div id="bd_3" class="tx" style="left:765.60px;top:738.84px;font-size:12px;line-height:12px;font-weight:normal;color:#facc15;letter-spacing:0.889px;font-family:'Liberation Sans',sans-serif;-webkit-text-stroke:0.35px currentColor;">pending</div>
<div id="du_3" class="tx" style="left:891.20px;top:737.65px;font-size:14px;line-height:14px;font-weight:normal;color:#f8fafc;letter-spacing:0.417px;font-family:'Liberation Sans',sans-serif;-webkit-text-stroke:0.12px currentColor;">90m</div>
<div id="cr_3" class="tx" style="left:1014.00px;top:737.65px;font-size:14px;line-height:14px;font-weight:normal;color:#94a3b8;letter-spacing:0.425px;font-family:'Liberation Sans',sans-serif;-webkit-text-stroke:0.12px currentColor;">3/10/2026</div>
<div id="ex_3" class="tx" style="left:1147.40px;top:737.65px;font-size:14px;line-height:14px;font-weight:normal;color:#94a3b8;letter-spacing:0.425px;font-family:'Liberation Sans',sans-serif;-webkit-text-stroke:0.12px currentColor;">-</div>
</body></html>
